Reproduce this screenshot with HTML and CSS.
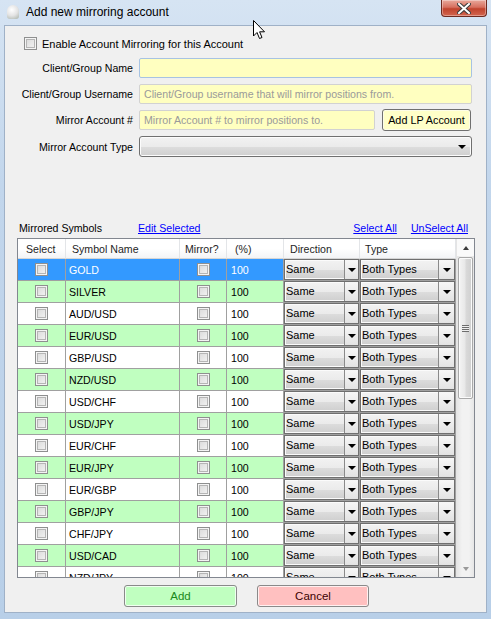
FILE: index.html
```html
<!DOCTYPE html>
<html>

<head>
    <meta charset="utf-8">
    <meta name="viewport" content="width=device-width">
    <title>Add new mirroring account</title>
    <link rel="stylesheet" href="styles.css">
</head>

<body>
    <div class="window">
        <div class="title-bar">
            <span class="app-icon"></span>
            <span class="title">Add new mirroring account</span>
            <span class="close-btn">
                <svg width="14" height="11" viewBox="0 0 14 11">
                    <path d="M2 1 L12 10 M12 1 L2 10" stroke="#3b3b3b" stroke-width="4" stroke-linecap="square" />
                    <path d="M2 1 L12 10 M12 1 L2 10" stroke="#fff" stroke-width="2" stroke-linecap="square" />
                </svg>
            </span>
        </div>

        <div class="client">
            <div class="enable-row">
                <span class="chk"></span>
                <span>Enable Account Mirroring for this Account</span>
            </div>

            <div class="form">
                <span class="lbl">Client/Group Name</span>
                <div class="input focused"></div>

                <span class="lbl">Client/Group Username</span>
                <div class="input"><span class="placeholder">Client/Group username that will mirror positions from.</span></div>

                <span class="lbl">Mirror Account #</span>
                <div class="field-with-btn">
                    <div class="input"><span class="placeholder">Mirror Account # to mirror positions to.</span></div>
                    <span class="lp-btn">Add LP Account</span>
                </div>

                <span class="lbl">Mirror Account Type</span>
                <div class="select"><span class="arrow"></span></div>
            </div>

            <div class="symbols-bar">
                <span class="symbols-title">Mirrored Symbols</span>
                <a href="#">Edit Selected</a>
                <span class="spacer"></span>
                <a href="#">Select All</a>
                <a href="#" class="unselect">UnSelect All</a>
            </div>

            <div class="grid">
                <div class="grid-view">
                    <table class="symbols">
                        <thead>
                            <tr>
                                <th class="c-select">Select</th>
                                <th class="c-name">Symbol Name</th>
                                <th class="c-mirror">Mirror?</th>
                                <th class="c-pct">(%)</th>
                                <th class="c-dir">Direction</th>
                                <th class="c-type">Type</th>
                            </tr>
                        </thead>
                        <tbody id="symbol-rows"></tbody>
                    </table>
                </div>
                <div class="vscroll">
                    <span class="sb-btn"><span class="sb-arrow up"></span></span>
                    <div class="sb-track">
                        <div class="sb-thumb"><span class="grip"></span></div>
                    </div>
                    <span class="sb-btn"><span class="sb-arrow down"></span></span>
                </div>
            </div>

            <div class="actions">
                <span class="btn btn-add">Add</span>
                <span class="btn btn-cancel">Cancel</span>
            </div>
        </div>

        <svg class="cursor" width="13" height="20" viewBox="0 0 13 20">
            <path d="M0.5 0.5 L0.5 16 L4 12.5 L6.5 18.5 L9 17.5 L6.6 11.8 L11.5 11.8 Z" fill="#fff" stroke="#000" stroke-width="1" stroke-linejoin="round" />
        </svg>
    </div>

    <script>
        var symbols = ['GOLD', 'SILVER', 'AUD/USD', 'EUR/USD', 'GBP/USD', 'NZD/USD', 'USD/CHF', 'USD/JPY',
            'EUR/CHF', 'EUR/JPY', 'EUR/GBP', 'GBP/JPY', 'CHF/JPY', 'USD/CAD', 'NZD/JPY'];
        var rows = document.getElementById('symbol-rows');

        function combo(text) {
            return '<div class="combo"><span class="combo-text">' + text + '</span>' +
                '<span class="combo-btn"><span class="arrow"></span></span></div>';
        }

        for (var i = 0, len = symbols.length; i < len; i++) {
            var tr = document.createElement('tr');
            if (i === 0) tr.className = 'selected';
            else if (i % 2 === 1) tr.className = 'alt';
            tr.innerHTML =
                '<td class="center"><span class="chk"></span></td>' +
                '<td>' + symbols[i] + '</td>' +
                '<td class="center"><span class="chk"></span></td>' +
                '<td>100</td>' +
                '<td class="cb">' + combo('Same') + '</td>' +
                '<td class="cb">' + combo('Both Types') + '</td>';
            rows.appendChild(tr);
        }
    </script>
</body>

</html>
```

FILE: styles.css
```css
* {
    box-sizing: border-box;
}

body {
    margin: 0;
    font-family: "Liberation Sans", Arial, sans-serif;
    font-size: 10.6px;
    color: #000;
}

a {
    color: #0000ff;
}

.window {
    position: relative;
    width: 491px;
    height: 619px;
    display: flex;
    flex-direction: column;
    background: linear-gradient(180deg, #d6e4f3 0%, #c2d6ec 30%, #b8cfe8 100%);
    overflow: hidden;
}

/* title bar */
.title-bar {
    height: 25px;
    display: flex;
    align-items: flex-start;
    flex-shrink: 0;
}

.app-icon {
    width: 12px;
    height: 14px;
    margin: 5px 0 0 7px;
    border-radius: 6px 6px 3px 3px;
    background: radial-gradient(circle at 40% 35%, #ffffff 0%, #e4e4e4 50%, #a9b2a9 100%);
}

.title {
    margin: 5px 0 0 7px;
    font-size: 12px;
    line-height: 15px;
    color: #000;
}

.close-btn {
    margin-left: auto;
    margin-right: 4px;
    width: 46px;
    height: 17px;
    display: flex;
    align-items: center;
    justify-content: center;
    border: 1px solid #6d2a20;
    border-top: none;
    border-radius: 0 0 4px 4px;
    background: linear-gradient(180deg, #e9a99c 0%, #d7705f 45%, #c0432d 55%, #d3664f 100%);
    box-shadow: inset 0 0 0 1px rgba(255, 255, 255, 0.35);
}

/* client area */
.client {
    flex: 1;
    margin: 0 4px 6px 4px;
    border: 1px solid #9fb1c7;
    background: #f0f0f0;
    display: flex;
    flex-direction: column;
}

.chk {
    display: inline-block;
    width: 13px;
    height: 13px;
    border: 1px solid #8e8f8f;
    background: linear-gradient(135deg, #d7d7d7 0%, #f6f6f6 100%);
    box-shadow: inset 0 0 0 1px #f4f4f4, inset 0 0 0 2px #b5b5b5;
    vertical-align: middle;
}

.enable-row {
    display: flex;
    align-items: center;
    gap: 5px;
    margin: 11px 0 0 19px;
    height: 13px;
    font-size: 11px;
}

.form {
    display: grid;
    grid-template-columns: 128px 1fr;
    column-gap: 6px;
    row-gap: 6px;
    margin-top: 8px;
    padding-right: 14px;
    align-items: center;
}

.lbl {
    text-align: right;
    white-space: nowrap;
}

.input {
    height: 20px;
    background: #ffffc0;
    border: 1px solid #d2d2d2;
    border-radius: 2px;
    padding: 0 4px;
    line-height: 18px;
}

.input.focused {
    border-color: #a7c3e3;
}

.placeholder {
    color: #9a9a9a;
}

.field-with-btn {
    display: flex;
    align-items: center;
    gap: 7px;
}

.field-with-btn .input {
    width: 236px;
}

.lp-btn {
    width: 89px;
    height: 22px;
    margin: -1px 0;
    border: 1px solid #707070;
    border-radius: 3px;
    background: #ffffc8;
    box-shadow: inset 0 0 0 1px #fdfde8;
    text-align: center;
    line-height: 20px;
    font-size: 10.8px;
    white-space: nowrap;
}

.select {
    height: 21px;
    border: 1px solid #707070;
    border-radius: 3px;
    background: linear-gradient(180deg, #f2f2f2 0%, #ebebeb 50%, #dddddd 51%, #cfcfcf 100%);
    box-shadow: inset 0 0 0 1px #fcfcfc;
    display: flex;
    align-items: center;
    justify-content: flex-end;
    padding-right: 5px;
}

.arrow {
    width: 0;
    height: 0;
    border-left: 4px solid transparent;
    border-right: 4px solid transparent;
    border-top: 4px solid #000;
}

/* symbols header */
.symbols-bar {
    display: flex;
    align-items: center;
    height: 16px;
    margin-top: 63px;
    padding: 0 18px 0 14px;
}

.symbols-title {
    width: 119px;
}

.spacer {
    flex: 1;
}

.unselect {
    margin-left: 14px;
}

/* grid */
.grid {
    display: flex;
    width: 458px;
    height: 340px;
    margin: 2px 0 0 12px;
    border: 1px solid #828790;
    background: #fff;
}

.grid-view {
    width: 438px;
    overflow: hidden;
}

.symbols {
    border-collapse: separate;
    border-spacing: 0;
    table-layout: fixed;
    width: 438px;
}

.symbols th {
    height: 20px;
    padding: 0 0 0 6px;
    text-align: left;
    font-weight: normal;
    color: #1e1e1e;
    background: linear-gradient(180deg, #ffffff 0%, #ffffff 50%, #f3f4f6 100%);
    border-right: 1px solid #e3e5e8;
    border-bottom: 1px solid #d5d5d5;
}

.symbols th.c-select {
    width: 48px;
    padding-left: 8px;
}

.symbols th.c-name {
    width: 114px;
}

.symbols th.c-mirror {
    width: 47px;
    padding-left: 5px;
}

.symbols th.c-pct {
    width: 57px;
    padding-left: 8px;
}

.symbols th.c-dir {
    width: 76px;
}

.symbols th.c-type {
    width: 96px;
    padding-left: 5px;
}

.symbols td {
    height: 22px;
    padding: 0 0 0 3px;
    border-right: 1px solid #a0a0a0;
    border-bottom: 1px solid #a0a0a0;
    white-space: nowrap;
    overflow: hidden;
}

.symbols td.center {
    padding: 0;
    text-align: center;
    line-height: 0;
}

.symbols td:nth-child(4) {
    padding-left: 4px;
}

.symbols tr.alt td {
    background: #c0ffc0;
}

.symbols tr.selected td {
    background: #3399ff;
    color: #fff;
}

.symbols td.cb,
.symbols tr.alt td.cb,
.symbols tr.selected td.cb {
    padding: 0;
    background: #f0f0f0;
    color: #000;
}

.combo {
    display: flex;
    height: 21px;
    border: 1px solid #6f6f6f;
    background: linear-gradient(180deg, #f2f2f2 0%, #ebebeb 50%, #dddddd 51%, #cfcfcf 100%);
    box-shadow: inset 0 0 0 1px #fbfbfb;
}

.combo-text {
    flex: 1;
    padding-left: 1px;
    line-height: 19px;
    font-size: 11px;
}

.combo-btn {
    width: 14px;
    display: flex;
    align-items: center;
    justify-content: center;
    border-left: 1px solid #8a8a8a;
    background: linear-gradient(180deg, #f7f7f7 0%, #e3e3e3 100%);
}

.cb:last-child .combo-btn {
    width: 16px;
}

/* vertical scrollbar */
.vscroll {
    width: 18px;
    display: flex;
    flex-direction: column;
    border-left: 1px solid #e4e4e4;
    background: linear-gradient(90deg, #e6e6e6 0%, #f2f2f2 30%, #f2f2f2 70%, #e6e6e6 100%);
}

.sb-btn {
    height: 17px;
    display: flex;
    align-items: center;
    justify-content: center;
}

.sb-btn:first-child {
    background: #fafafa;
}

.sb-arrow {
    width: 0;
    height: 0;
    border-left: 3.5px solid transparent;
    border-right: 3.5px solid transparent;
}

.sb-arrow.up {
    border-bottom: 4px solid #3c3c3c;
}

.sb-arrow.down {
    border-top: 4px solid #9a9a9a;
}

.sb-track {
    flex: 1;
}

.sb-thumb {
    height: 142px;
    margin: 1px 1px 0 1px;
    border: 1px solid #a9a9a9;
    border-radius: 2px;
    background: linear-gradient(90deg, #f4f4f4 0%, #e8e8e8 45%, #d9d9d9 55%, #cfcfcf 100%);
    box-shadow: inset 0 0 0 1px #fbfbfb;
    display: flex;
    align-items: center;
    justify-content: center;
}

.grip {
    width: 7px;
    height: 7px;
    background: repeating-linear-gradient(180deg, #6d6d6d 0, #6d6d6d 1px, #eeeeee 1px, #eeeeee 2px);
}

/* bottom buttons */
.actions {
    display: flex;
    gap: 20px;
    margin-top: 7px;
    padding-left: 119px;
}

.btn {
    width: 113px;
    height: 22px;
    border: 1px solid #8a8a8a;
    border-radius: 3px;
    text-align: center;
    line-height: 20px;
    font-size: 11.5px;
}

.btn-add {
    background: #c0ffc0;
    color: #1b8a1b;
    box-shadow: inset 0 0 0 1px #f0fff0;
}

.btn-cancel {
    width: 112px;
    background: #ffc0c0;
    color: #3c0000;
    box-shadow: inset 0 0 0 1px #fff0f0;
}

.cursor {
    position: absolute;
    left: 253px;
    top: 20px;
}
```
